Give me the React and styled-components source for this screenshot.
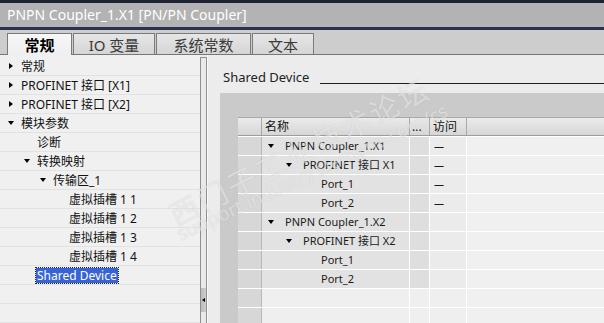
import React from 'react';
import styled, { createGlobalStyle, css } from 'styled-components';

const Global = createGlobalStyle`
  html, body { margin: 0; padding: 0; background: #ececec; }
  body { font-family: "Noto Sans", "Noto Sans CJK SC", sans-serif; overflow: hidden; }
  #root { width: 604px; height: 323px; }
`;

const Window = styled.div`
  position: relative;
  width: 604px;
  height: 323px;
  display: flex;
  flex-direction: column;
  overflow: hidden;
  background: #ececec;
`;

const TopEdge = styled.div`
  flex: none;
  height: 3px;
  background: #1f2336;
`;

const TitleBar = styled.div`
  flex: none;
  height: 24px;
  background: #b3b3b3;
  color: #ffffff;
  font-size: 14px;
  line-height: 24px;
  padding-left: 7px;
  white-space: nowrap;
`;

const TitleRule = styled.div`
  flex: none;
  height: 3px;
  background: #2c3150;
`;

const TabStrip = styled.div`
  flex: none;
  box-sizing: border-box;
  height: 25px;
  background: #cdcdcd;
  border-bottom: 1px solid #777777;
  display: flex;
  align-items: flex-end;
  padding-left: 7px;
  gap: 1px;
`;

const Tab = styled.div`
  box-sizing: border-box;
  width: ${p => p.$w}px;
  height: 21px;
  border: 1px solid #7a7a7a;
  border-bottom: none;
  background: linear-gradient(#e6e6e6, #d5d5d5);
  color: #3a3a3a;
  font-size: 15px;
  display: flex;
  align-items: center;
  justify-content: center;
  white-space: nowrap;
  ${p => p.$active && css`
    position: relative;
    z-index: 1;
    height: 22px;
    margin-bottom: -1px;
    background: linear-gradient(#f7f7f7, #efefef);
    color: #000000;
    font-weight: bold;
  `}
`;

const Body = styled.div`
  flex: 1;
  min-height: 0;
  display: flex;
`;

const LeftPanel = styled.div`
  flex: none;
  width: 200px;
  background: #f0f0f0;
  padding-top: 2px;
  display: flex;
  flex-direction: column;
`;

const TreeRow = styled.div`
  flex: none;
  box-sizing: border-box;
  height: 19px;
  border-bottom: 1px solid #e2e2e2;
  display: flex;
  align-items: center;
  padding-left: ${p => 3 + 16 * p.$level}px;
  font-size: 12px;
  color: #111111;
  white-space: nowrap;
`;

const Expander = styled.span`
  flex: none;
  width: ${p => p.$size}px;
  height: 100%;
  display: flex;
  align-items: center;
  justify-content: center;
  &::before {
    content: '';
    display: ${p => (p.$dir ? 'block' : 'none')};
    width: 0;
    height: 0;
    border-style: solid;
    ${p => p.$dir === 'right' && css`
      border-width: 3.5px 0 3.5px 4px;
      border-color: transparent transparent transparent #000;
    `}
    ${p => p.$dir === 'down' && css`
      border-width: 4px 3.5px 0 3.5px;
      border-color: #000 transparent transparent transparent;
    `}
  }
`;

const TreeLabel = styled.span`
  margin-left: 1px;
  padding: 0 1px;
  line-height: 15px;
  ${p => p.$selected && css`
    background: #3763d6;
    color: #ffffff;
    outline: 1px dotted #222;
  `}
`;

const Scrollbar = styled.div`
  flex: none;
  box-sizing: border-box;
  width: 7px;
  margin-top: 2px;
  border: 1px solid #8f8f8f;
  border-bottom: none;
  background: #e9e9e9;
  display: flex;
  flex-direction: column;
  justify-content: flex-end;
  padding-bottom: 11px;
`;

const CollapseButton = styled.div`
  height: 24px;
  background: linear-gradient(90deg, #bcbcbc, #cdcdcd);
  display: flex;
  align-items: center;
  justify-content: center;
  &::before {
    content: '';
    width: 0;
    height: 0;
    border-style: solid;
    border-width: 2.5px 3px 2.5px 0;
    border-color: transparent #000 transparent transparent;
  }
`;

const RightPanel = styled.div`
  flex: 1;
  min-width: 0;
  display: flex;
  flex-direction: column;
  border-left: 1px solid #fafafa;
  padding-left: 12px;
  background: #ececec;
`;

const Heading = styled.div`
  flex: none;
  box-sizing: border-box;
  height: 38px;
  display: flex;
  align-items: flex-end;
  padding: 0 0 8px 3px;
`;

const HeadingText = styled.span`
  font-size: 13px;
  line-height: 15px;
  color: #222222;
  white-space: nowrap;
`;

const HeadingRule = styled.span`
  flex: 1;
  height: 1px;
  background: #1e1e1e;
  margin: 0 0 1px 11px;
`;

const TableArea = styled.div`
  flex: 1;
  min-height: 0;
  background: #cacaca;
  padding: 24px 0 0 18px;
  overflow: hidden;
`;

const cols = '24px 148px 20px 37px 1fr';

const HeaderRow = styled.div`
  display: grid;
  grid-template-columns: ${cols};
  box-sizing: border-box;
  height: 19px;
  border-top: 1px solid #a9a9a9;
  border-bottom: 1px solid #9d9d9d;
  background: linear-gradient(#ebebeb, #d6d6d6);
  box-shadow: 0 1px 0 #ffffff;
  margin-bottom: 1px;
`;

const HeaderCell = styled.div`
  border-right: 1px solid #a9a9a9;
  font-size: 12px;
  line-height: 17px;
  padding-left: ${p => p.$pad ?? 3}px;
  color: #111111;
  white-space: nowrap;
  overflow: hidden;
  &:last-child { border-right: none; }
`;

const DataRow = styled.div`
  display: grid;
  grid-template-columns: ${cols};
  box-sizing: border-box;
  height: 19px;
  border-bottom: 1px solid #ffffff;
  font-size: 11px;
  line-height: 18px;
  color: #1a1a1a;
`;

const RowHead = styled.div`
  background: #d7d7d7;
  border-right: 1px solid #b8b8b8;
`;

const NameCell = styled.div`
  background: ${p => (p.$filled ? '#e2e2e2' : '#efefef')};
  border-right: 1px solid #ffffff;
  display: flex;
  align-items: center;
  padding-left: ${p => 18 * p.$level}px;
  white-space: nowrap;
`;

const NameText = styled.span`
  margin-left: 5px;
`;

const DotsCell = styled.div`
  background: ${p => (p.$filled ? '#dedede' : '#efefef')};
  border-right: 1px solid #ffffff;
`;

const AccessCell = styled.div`
  background: ${p => (p.$filled ? '#ebebeb' : '#efefef')};
  border-right: 1px solid #ffffff;
  padding-left: 4px;
  font-size: 10px;
`;

const RestCell = styled.div`
  background: #f0f0f0;
`;

const WatermarkCN = styled.div`
  position: absolute;
  left: 299px;
  top: 150px;
  transform: translate(-50%, -50%) rotate(-27deg);
  font-family: "Noto Sans CJK SC", sans-serif;
  font-size: 29px;
  letter-spacing: 3px;
  color: rgba(255, 255, 255, 0.5);
  text-shadow: 0 0 1px rgba(110, 110, 110, 0.25);
  white-space: nowrap;
  pointer-events: none;
`;

const WatermarkURL = styled.div`
  position: absolute;
  left: 312px;
  top: 172px;
  transform: translate(-50%, -50%) rotate(-25deg);
  font-family: "Noto Sans", sans-serif;
  font-size: 19px;
  color: rgba(255, 255, 255, 0.5);
  text-shadow: 0 0 1px rgba(110, 110, 110, 0.25);
  white-space: nowrap;
  pointer-events: none;
`;

const tree = [
  { label: '常规', level: 0, dir: 'right' },
  { label: 'PROFINET 接口 [X1]', level: 0, dir: 'right' },
  { label: 'PROFINET 接口 [X2]', level: 0, dir: 'right' },
  { label: '模块参数', level: 0, dir: 'down' },
  { label: '诊断', level: 1 },
  { label: '转换映射', level: 1, dir: 'down' },
  { label: '传输区_1', level: 2, dir: 'down' },
  { label: '虚拟插槽 1 1', level: 3 },
  { label: '虚拟插槽 1 2', level: 3 },
  { label: '虚拟插槽 1 3', level: 3 },
  { label: '虚拟插槽 1 4', level: 3 },
  { label: 'Shared Device', level: 1, selected: true },
  { label: '', level: 0 },
  { label: '', level: 0 },
];

const rows = [
  { name: 'PNPN Coupler_1.X1', level: 0, dir: 'down', access: '—' },
  { name: 'PROFINET 接口 X1', level: 1, dir: 'down', access: '—' },
  { name: 'Port_1', level: 2, access: '—' },
  { name: 'Port_2', level: 2, access: '—' },
  { name: 'PNPN Coupler_1.X2', level: 0, dir: 'down' },
  { name: 'PROFINET 接口 X2', level: 1, dir: 'down' },
  { name: 'Port_1', level: 2 },
  { name: 'Port_2', level: 2 },
  { empty: true },
  { empty: true },
];

const tabs = [
  { label: '常规', w: 65, active: true },
  { label: 'IO 变量', w: 82 },
  { label: '系统常数', w: 95 },
  { label: '文本', w: 62 },
];

export default function App() {
  return (
    <Window>
      <Global />
      <TopEdge />
      <TitleBar>PNPN Coupler_1.X1 [PN/PN Coupler]</TitleBar>
      <TitleRule />
      <TabStrip>
        {tabs.map(t => (
          <Tab key={t.label} $w={t.w} $active={t.active}>{t.label}</Tab>
        ))}
      </TabStrip>
      <Body>
        <LeftPanel>
          {tree.map((n, i) => (
            <TreeRow key={i} $level={n.level}>
              <Expander $size={16} $dir={n.dir} />
              {n.label && <TreeLabel $selected={n.selected}>{n.label}</TreeLabel>}
            </TreeRow>
          ))}
        </LeftPanel>
        <Scrollbar>
          <CollapseButton />
        </Scrollbar>
        <RightPanel>
          <Heading>
            <HeadingText>Shared Device</HeadingText>
            <HeadingRule />
          </Heading>
          <TableArea>
            <HeaderRow>
              <HeaderCell />
              <HeaderCell>名称</HeaderCell>
              <HeaderCell $pad={2}>...</HeaderCell>
              <HeaderCell>访问</HeaderCell>
              <HeaderCell />
            </HeaderRow>
            {rows.map((r, i) => (
              <DataRow key={i}>
                <RowHead />
                <NameCell $filled={!r.empty} $level={r.level || 0}>
                  {!r.empty && (
                    <>
                      <Expander $size={18} $dir={r.dir} />
                      <NameText>{r.name}</NameText>
                    </>
                  )}
                </NameCell>
                <DotsCell $filled={!r.empty} />
                <AccessCell $filled={!r.empty}>{r.access || ''}</AccessCell>
                <RestCell />
              </DataRow>
            ))}
          </TableArea>
        </RightPanel>
      </Body>
      <WatermarkCN>西门子工业技术论坛</WatermarkCN>
      <WatermarkURL>support.industry.siemens.com/cs</WatermarkURL>
    </Window>
  );
}
